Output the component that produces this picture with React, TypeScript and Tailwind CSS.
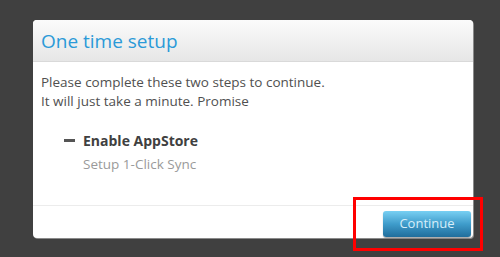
import React from "react";

export default function App() {
  return (
    <div
      className="w-[500px] h-[257px] bg-[#404040] pt-[20px] pl-[33px] overflow-hidden"
      style={{ fontFamily: '"Open Sans", "DejaVu Sans", sans-serif' }}
    >
      <div className="relative w-[440px] h-[218px] bg-white rounded-[4px] shadow-[1px_1px_0_#8a8a8a] flex flex-col overflow-visible">
        <div className="h-[42px] rounded-t-[4px] bg-gradient-to-b from-[#fbfbfb] to-[#e6e6e6] border-b border-[#d9d9d9] flex items-center pl-[8px] pt-[1px]">
          <span className="text-[19px] text-[#2b9ad8] leading-none">One time setup</span>
        </div>
        <div className="flex-1 pl-[8px] pt-[11px] text-[13.5px] text-[#505050] leading-[19px]">
          <div>Please complete these two steps to continue.</div>
          <div>It will just take a minute. Promise</div>
          <div className="mt-[20px] pl-[23px] flex items-center gap-[8px]">
            <span className="block w-[11px] h-[3px] bg-[#555]"></span>
            <span className="font-bold text-[14px] text-[#404040]">Enable AppStore</span>
          </div>
          <div className="pl-[42px] mt-[5px] text-[#9a9a9a]">Setup 1-Click Sync</div>
        </div>
        <div className="h-[33px] border-t border-[#ececec] flex justify-end items-start pt-[5px] pr-[2px]">
          <button className="w-[88px] h-[26px] rounded-[3px] bg-gradient-to-b from-[#78d0f3] via-[#3f9ccb] to-[#206e9c] text-[13px] text-[#d6eef9] shadow-[0_1px_1px_rgba(0,0,0,0.35)]">
            Continue
          </button>
        </div>
        <div className="absolute left-[320px] top-[177px] w-[130px] h-[54px] border-[3px] border-[#ff0000]"></div>
      </div>
    </div>
  );
}
